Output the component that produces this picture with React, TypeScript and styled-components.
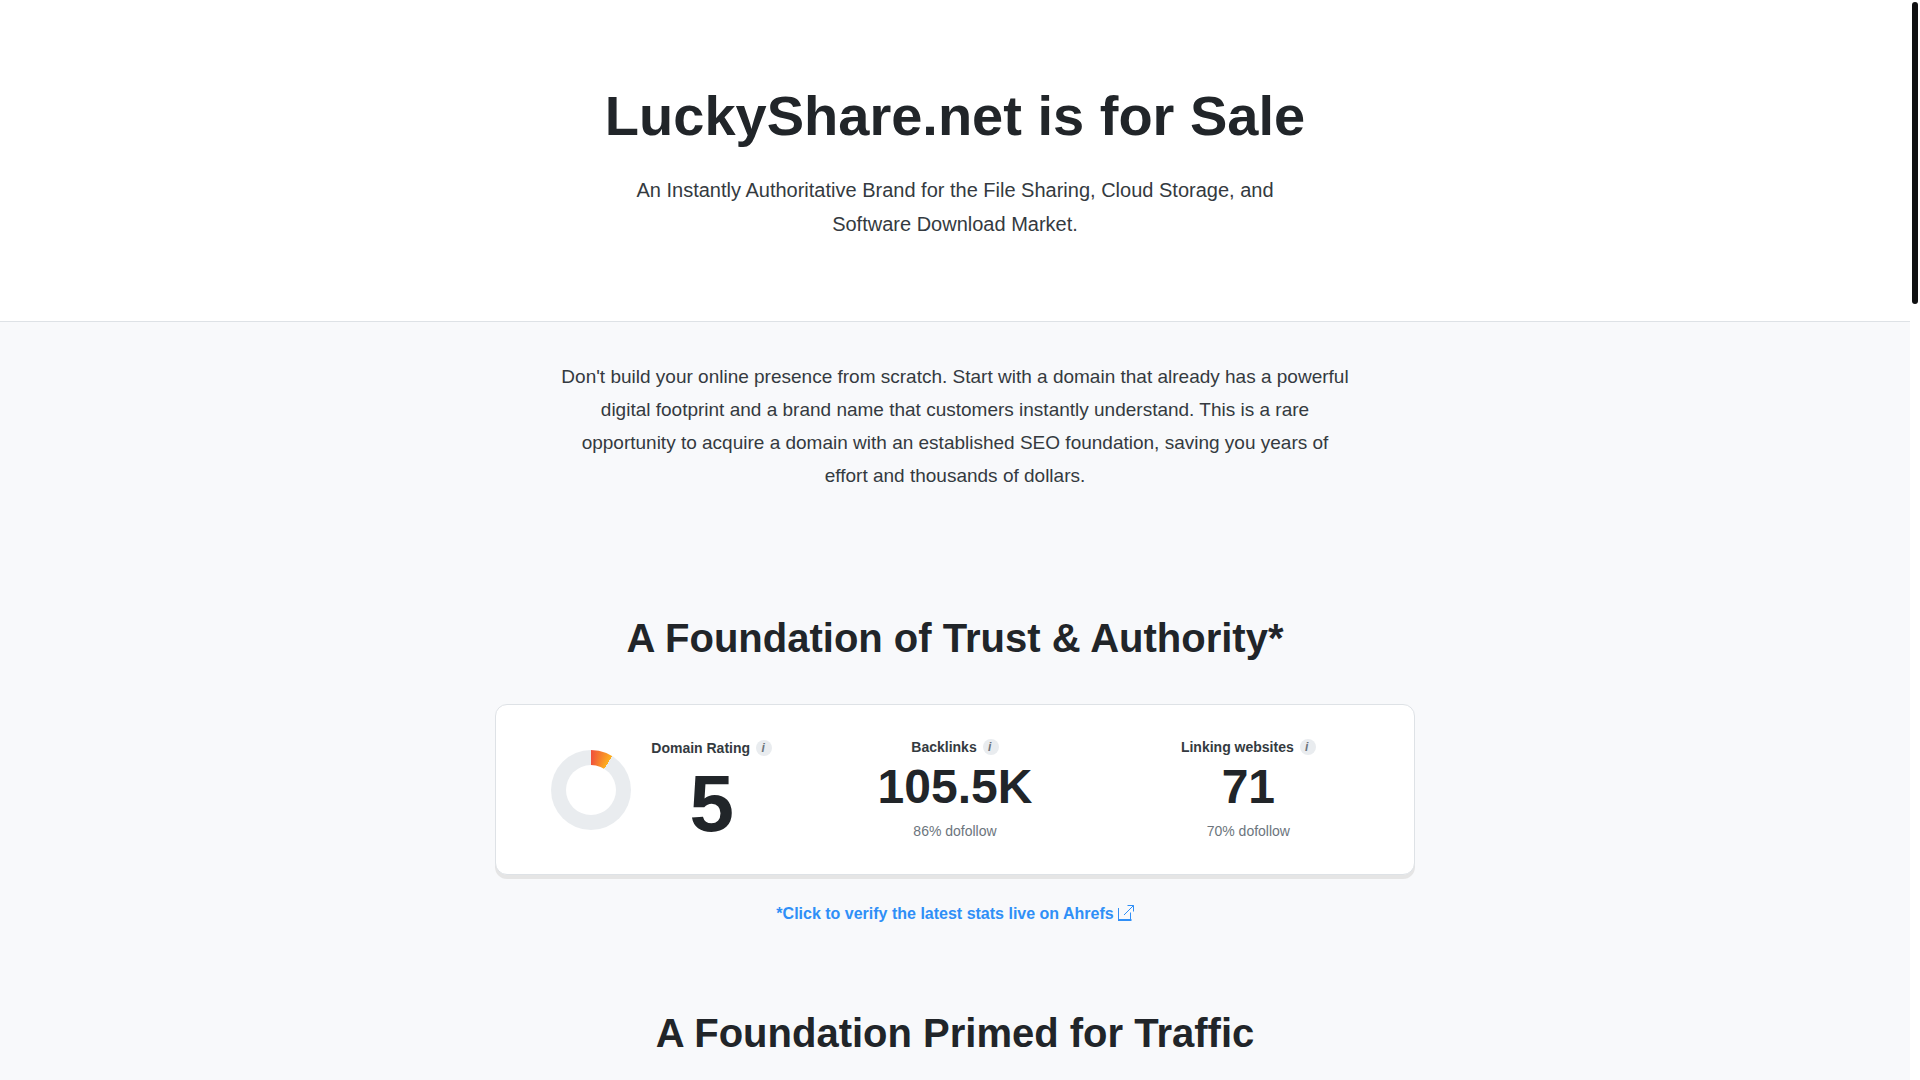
import React from "react";
import styled, { createGlobalStyle } from "styled-components";

const GlobalStyle = createGlobalStyle`
  * {
    box-sizing: border-box;
  }

  body {
    margin: 0;
    background: #ffffff;
    color: #343a40;
    font-family: "Liberation Sans", Arial, sans-serif;
    font-size: 16px;
    line-height: 27px;
  }
`;

const Shell = styled.div`
  display: flex;
  height: 100vh;
  overflow: hidden;
`;

const Page = styled.div`
  flex: 1;
  min-width: 0;
  overflow: hidden;
  background: #f8f9fb;
`;

const ScrollRail = styled.div`
  width: 10px;
  padding: 2px;
  background: #ffffff;
`;

const ScrollThumb = styled.div`
  height: 28vh;
  border-radius: 3px;
  background: #0f1011;
`;

const Hero = styled.header`
  padding: 80px 20px;
  border-bottom: 1px solid #dee2e6;
  background: #ffffff;
  text-align: center;
`;

const Title = styled.h1`
  margin: 0 0 22px;
  color: #212529;
  font-size: 56px;
  line-height: 71px;
`;

const Tagline = styled.p`
  max-width: 700px;
  margin: 0 auto;
  font-size: 20px;
  line-height: 34px;
`;

const Container = styled.main`
  max-width: 960px;
  margin: 0 auto;
  padding: 38px 20px;
  text-align: center;
`;

const Intro = styled.p`
  max-width: 790px;
  margin: 0 auto 80px;
  font-size: 19px;
  line-height: 33px;
`;

const Section = styled.section`
  padding: 40px 0;
`;

const SectionTitle = styled.h2`
  margin: 0 0 40px;
  color: #212529;
  font-size: 40px;
  line-height: 52px;
`;

const StatsCard = styled.div`
  display: grid;
  grid-template-columns: repeat(3, 1fr);
  align-items: center;
  padding: 30px 19px;
  border: 1px solid #dee2e6;
  border-radius: 12px;
  background: #ffffff;
  box-shadow: 0 4px 0 #e5e5e5;
`;

const RatingStat = styled.div`
  display: flex;
  align-items: center;
  justify-content: center;
  gap: 20px;
`;

const Donut = styled.div`
  display: grid;
  place-items: center;
  width: 80px;
  height: 80px;
  border-radius: 50%;
  background: conic-gradient(#f0503c 0deg, #fdb01e 32deg, #e9ecef 32deg);
`;

const DonutHole = styled.div`
  width: 50px;
  height: 50px;
  border-radius: 50%;
  background: #ffffff;
`;

const Stat = styled.div`
  display: flex;
  flex-direction: column;
  align-items: center;
`;

const StatLabel = styled.div`
  display: flex;
  align-items: center;
  gap: 6px;
  margin-bottom: 4px;
  font-size: 14px;
  font-weight: 700;
  line-height: 24px;
`;

const InfoBadge = styled.span`
  width: 16px;
  height: 16px;
  padding-right: 2px;
  border-radius: 50%;
  background: #e9ecef;
  color: #6c757d;
  font-size: 12px;
  font-style: italic;
  line-height: 16px;
`;

const StatValue = styled.div<{ $large?: boolean }>`
  color: #212529;
  font-size: ${(p) => (p.$large ? 80 : 48)}px;
  font-weight: 700;
  line-height: 1;
`;

const StatNote = styled.div`
  margin-top: 8px;
  color: #6c757d;
  font-size: 14px;
  line-height: 25px;
`;

const VerifyRow = styled.p`
  margin: 25px 0 0;
`;

const VerifyLink = styled.a`
  color: #2f8ff7;
  font-weight: 700;
  text-decoration: none;
`;

const ExternalIcon = styled.svg`
  width: 16px;
  height: 16px;
  margin-left: 4px;
  vertical-align: -2px;
`;

const Label = ({ children }: { children: React.ReactNode }) => (
  <StatLabel>
    {children}
    <InfoBadge>i</InfoBadge>
  </StatLabel>
);

const linkStats = [
  { label: "Backlinks", value: "105.5K", note: "86% dofollow" },
  { label: "Linking websites", value: "71", note: "70% dofollow" },
];

export default function App() {
  return (
    <Shell>
      <GlobalStyle />
      <Page>
        <Hero>
          <Title>LuckyShare.net is for Sale</Title>
          <Tagline>
            An Instantly Authoritative Brand for the File Sharing, Cloud Storage, and Software
            Download Market.
          </Tagline>
        </Hero>
        <Container>
          <Intro>
            Don't build your online presence from scratch. Start with a domain that already has a
            powerful digital footprint and a brand name that customers instantly understand. This
            is a rare opportunity to acquire a domain with an established SEO foundation, saving
            you years of effort and thousands of dollars.
          </Intro>
          <Section>
            <SectionTitle>A Foundation of Trust &amp; Authority*</SectionTitle>
            <StatsCard>
              <RatingStat>
                <Donut>
                  <DonutHole />
                </Donut>
                <Stat>
                  <Label>Domain Rating</Label>
                  <StatValue $large>5</StatValue>
                </Stat>
              </RatingStat>
              {linkStats.map((stat) => (
                <Stat key={stat.label}>
                  <Label>{stat.label}</Label>
                  <StatValue>{stat.value}</StatValue>
                  <StatNote>{stat.note}</StatNote>
                </Stat>
              ))}
            </StatsCard>
            <VerifyRow>
              <VerifyLink href="#ahrefs">
                *Click to verify the latest stats live on Ahrefs
                <ExternalIcon viewBox="0 0 16 16" fill="none" stroke="currentColor" aria-hidden="true">
                  <path d="M0.5 3v12" />
                  <path d="M0 15h13.5" strokeWidth="2" />
                  <path d="M12.5 7.5V15M9.5 0.5h6v6M15.5 0.5L6 10" />
                </ExternalIcon>
              </VerifyLink>
            </VerifyRow>
          </Section>
          <Section>
            <SectionTitle>A Foundation Primed for Traffic</SectionTitle>
          </Section>
        </Container>
      </Page>
      <ScrollRail aria-hidden="true">
        <ScrollThumb />
      </ScrollRail>
    </Shell>
  );
}
